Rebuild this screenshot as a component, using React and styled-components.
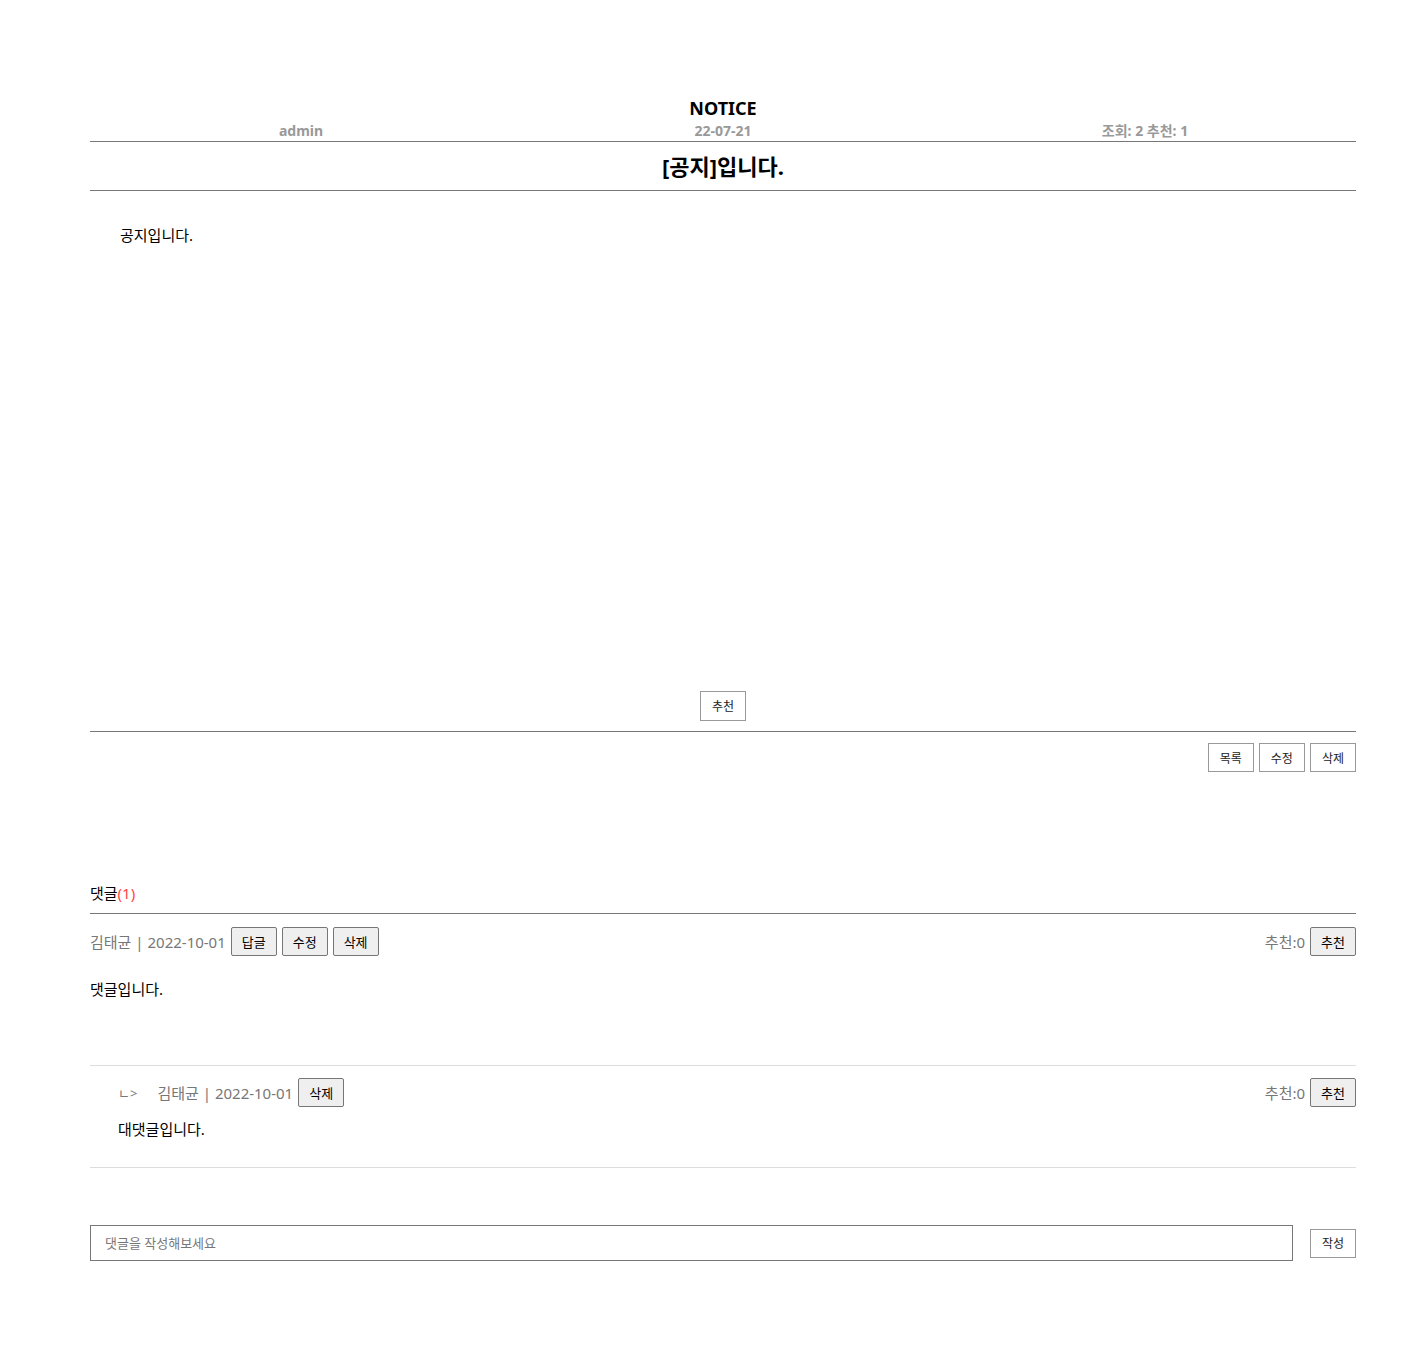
import React from 'react'
import styled, { createGlobalStyle } from 'styled-components'

const GlobalStyle = createGlobalStyle`
  body {
    margin: 0;
    background: #fff;
    font-family: "Noto Sans", "Noto Sans CJK KR", sans-serif;
    color: #000;
  }
`

const Page = styled.div`
  width: 1266px;
  padding: 97px 60px 80px 90px;
`

const Header = styled.header`
  padding-bottom: 1px;
  border-bottom: 1px solid #777;
`

const Board = styled.h2`
  margin: 0;
  text-align: center;
  font-size: 18px;
  line-height: 22px;
  font-weight: 700;
`

const Meta = styled.div`
  display: grid;
  grid-template-columns: repeat(3, 1fr);
  margin-top: 3px;
  font-size: 14px;
  line-height: 18px;
  font-weight: 700;
  color: #999;
  text-align: center;
`

const Title = styled.h1`
  margin: 0;
  height: 48px;
  line-height: 48px;
  text-align: center;
  font-size: 22px;
  font-weight: 700;
  border-bottom: 1px solid #777;
`

const Body = styled.div`
  height: 500px;
  box-sizing: border-box;
  padding: 34px 30px;
  font-size: 15px;
  line-height: 20px;
`

const RecommendWrap = styled.div`
  display: flex;
  justify-content: center;
  padding-bottom: 10px;
  border-bottom: 1px solid #777;
`

const PlainButton = styled.button`
  height: ${p => (p.$tall ? '30px' : '29px')};
  padding: 0 11px;
  background: #fff;
  border: 1px solid #999;
  border-radius: 0;
  font-family: inherit;
  font-size: 12px;
  color: #222;
`

const Actions = styled.div`
  display: flex;
  justify-content: flex-end;
  gap: 5px;
  padding-top: 11px;
`

const Comments = styled.section`
  margin-top: 111px;
`

const CommentHead = styled.div`
  font-size: 15px;
  line-height: 20px;
  padding-bottom: 10px;
  border-bottom: 1px solid #777;
`

const Count = styled.span`
  color: #f44;
`

const Item = styled.div`
  padding: ${p => (p.$reply ? '12px 0 28px 28px' : '13px 0 66px 0')};
  border-bottom: 1px solid #ddd;
`

const Row = styled.div`
  display: flex;
  align-items: center;
  justify-content: space-between;
`

const Left = styled.div`
  display: flex;
  align-items: center;
  gap: 5px;
  font-size: 15px;
  color: #777;
`

const Arrow = styled.span`
  font-size: 13px;
  margin-right: 15px;
`

const Small = styled.button`
  height: 29px;
  padding: 0 10px;
  background: #efefef;
  border: 1px solid #767676;
  border-radius: 2px;
  font-family: inherit;
  font-size: 13px;
  color: #000;
`

const Text = styled.p`
  margin: ${p => (p.$reply ? '12px 0 0' : '23px 0 0')};
  font-size: 15px;
  line-height: 20px;
`

const Write = styled.div`
  display: flex;
  align-items: center;
  justify-content: space-between;
  margin-top: 57px;
`

const Input = styled.input`
  width: 1203px;
  height: 36px;
  box-sizing: border-box;
  border: 1px solid #777;
  padding: 0 14px;
  font-family: inherit;
  font-size: 13px;
  &::placeholder {
    color: #777;
  }
`

const comments = [
  { id: 1, author: '김태균', date: '2022-10-01', text: '댓글입니다.', likes: 0 },
  { id: 2, author: '김태균', date: '2022-10-01', text: '대댓글입니다.', likes: 0, reply: true },
]

export default function App() {
  return (
    <Page>
      <GlobalStyle />
      <Header>
        <Board>NOTICE</Board>
        <Meta>
          <span>admin</span>
          <span>22-07-21</span>
          <span>조회: 2 추천: 1</span>
        </Meta>
      </Header>
      <Title>[공지]입니다.</Title>
      <Body>공지입니다.</Body>
      <RecommendWrap>
        <PlainButton $tall>추천</PlainButton>
      </RecommendWrap>
      <Actions>
        <PlainButton>목록</PlainButton>
        <PlainButton>수정</PlainButton>
        <PlainButton>삭제</PlainButton>
      </Actions>

      <Comments>
        <CommentHead>
          댓글<Count>(1)</Count>
        </CommentHead>
        {comments.map(c => (
          <Item key={c.id} $reply={c.reply}>
            <Row>
              <Left>
                {c.reply && <Arrow>ㄴ&gt;</Arrow>}
                <span>
                  {c.author} | {c.date}
                </span>
                {!c.reply && <Small>답글</Small>}
                {!c.reply && <Small>수정</Small>}
                <Small>삭제</Small>
              </Left>
              <Left>
                <span>추천:{c.likes}</span>
                <Small>추천</Small>
              </Left>
            </Row>
            <Text $reply={c.reply}>{c.text}</Text>
          </Item>
        ))}
        <Write>
          <Input placeholder="댓글을 작성해보세요" />
          <PlainButton>작성</PlainButton>
        </Write>
      </Comments>
    </Page>
  )
}
